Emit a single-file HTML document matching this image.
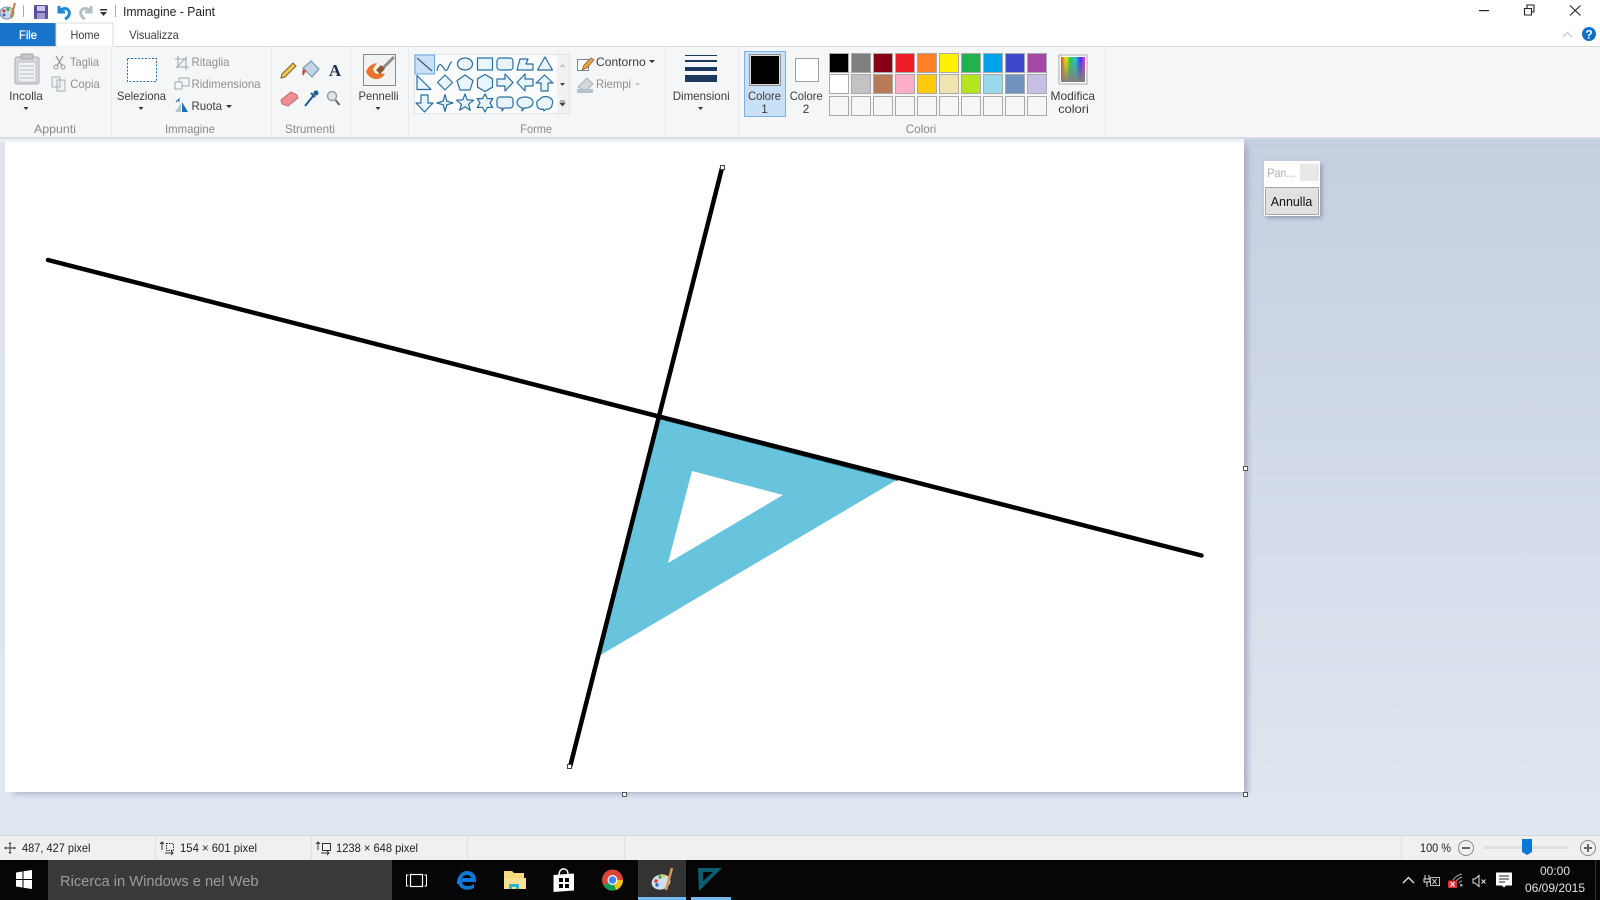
<!DOCTYPE html>
<html><head><meta charset="utf-8"><title>Immagine - Paint</title>
<style>
html,body{margin:0;padding:0;width:1600px;height:900px;overflow:hidden;background:#fff}
svg{display:block;position:absolute;left:0;top:0}
text{font-family:"Liberation Sans",sans-serif;font-size:12px;fill:#3c3c3c}
.g{fill:#8f8f8f}
.lb{fill:#8a8a8a}
.m{text-anchor:middle}
.sh *{fill:#e8f5fc;stroke:#2a6d9c;stroke-width:1.2;stroke-linejoin:round}
.tray{fill:#e4e4e4}
</style></head><body>
<svg width="1600" height="900" viewBox="0 0 1600 900" xmlns="http://www.w3.org/2000/svg">
<defs>
<linearGradient id="bg" x1="0" y1="0" x2="0" y2="1"><stop offset="0" stop-color="#c5cfdf"/><stop offset="1" stop-color="#e0e7f2"/></linearGradient>
<linearGradient id="lf" x1="0" y1="0" x2="0" y2="1"><stop offset="0" stop-color="#dfe4ee"/><stop offset="1" stop-color="#dfe6f1"/></linearGradient>
<linearGradient id="rb" x1="0" y1="0" x2="1" y2="0"><stop offset="0" stop-color="#e33"/><stop offset=".2" stop-color="#ee0"/><stop offset=".4" stop-color="#2c4"/><stop offset=".6" stop-color="#2cd"/><stop offset=".8" stop-color="#33e"/><stop offset="1" stop-color="#e3c"/></linearGradient>
<linearGradient id="rbv" x1="0" y1="0" x2="0" y2="1"><stop offset="0" stop-color="#808080" stop-opacity="0"/><stop offset="1" stop-color="#808080"/></linearGradient>
<filter id="blur" x="-5%" y="-5%" width="110%" height="110%"><feGaussianBlur stdDeviation="3"/></filter>
<filter id="blur2" x="-30%" y="-30%" width="160%" height="160%"><feGaussianBlur stdDeviation="2.5"/></filter>
</defs>

<!-- window white top -->
<rect width="1600" height="46" fill="#fff"/>
<!-- canvas area -->
<rect x="0" y="138" width="1600" height="697" fill="url(#bg)"/>
<rect x="0" y="138" width="5" height="697" fill="url(#lf)"/>
<rect x="14" y="146" width="1234" height="648" fill="#a9b1c6" filter="url(#blur)"/>
<rect x="0" y="139" width="1244" height="3" fill="#edf0f5"/>
<rect x="5" y="142" width="1239" height="650" fill="#fff"/>
<!-- ribbon -->
<rect x="0" y="46" width="1600" height="92" fill="#f5f6f7"/>
<rect x="0" y="46" width="1600" height="1" fill="#dadbdc"/>
<rect x="0" y="137" width="1600" height="2" fill="#d7dce4"/>
<g fill="#e9eaec">
<rect x="111" y="47" width="1" height="90"/><rect x="271" y="47" width="1" height="90"/>
<rect x="350" y="47" width="1" height="90"/><rect x="408" y="47" width="1" height="90"/>
<rect x="665" y="47" width="1" height="90"/><rect x="738" y="47" width="1" height="90"/>
<rect x="1105" y="47" width="1" height="90"/></g>

<!-- tabs -->
<rect x="0" y="23" width="56" height="23" fill="#1a74c9"/>
<text x="28" y="39" class="m" textLength="18" lengthAdjust="spacingAndGlyphs" style="fill:#fff;stroke:#fff;stroke-width:.25">File</text>
<path d="M56 46V23H113V46" fill="#fff" stroke="#dadbdc"/>
<rect x="57" y="45" width="56" height="3" fill="#f5f6f7"/>
<text x="70.500" y="39" textLength="29" lengthAdjust="spacingAndGlyphs">Home</text>
<text x="129.300" y="39" textLength="49.500" lengthAdjust="spacingAndGlyphs">Visualizza</text>

<!-- title bar -->
<text x="123" y="16" textLength="92" lengthAdjust="spacingAndGlyphs" style="font-size:13px;fill:#222">Immagine - Paint</text>
<rect x="23" y="5" width="1" height="12" fill="#aaa"/>
<rect x="115" y="5" width="1" height="12" fill="#aaa"/>
<!-- paint app icon -->
<ellipse cx="7" cy="13" rx="7" ry="6" fill="#c7d9e8" stroke="#6f8aa0"/>
<circle cx="4" cy="11" r="1.5" fill="#d33"/><circle cx="8" cy="9.500" r="1.500" fill="#3a3"/><circle cx="4" cy="15" r="1.500" fill="#36c"/>
<path d="M15 3L11 17" stroke="#c77b30" stroke-width="2"/>
<!-- save -->
<rect x="34" y="5" width="14" height="14" rx="1" fill="#5a4fa0"/>
<rect x="37" y="6" width="8" height="5" fill="#c9c6e8"/><rect x="37" y="13" width="8" height="6" fill="#9c98c8"/>
<!-- undo -->
<path d="M59 6V12H65M60 11C64 6 71 9 69 15C68 17 67 18 65 19" fill="none" stroke="#1e88d8" stroke-width="3"/>
<!-- redo -->
<path d="M91 6V12H85M90 11C86 6 79 9 81 15C82 17 83 18 85 19" fill="none" stroke="#b4c0c8" stroke-width="3"/>
<rect x="100" y="9" width="7" height="1.500" fill="#333"/><path d="M100 12h7l-3.500 4z" fill="#333"/>

<!-- window controls -->
<rect x="1479" y="10" width="10" height="1.200" fill="#222"/>
<path d="M1524.500 13.500h7v6.500h-7zM1527 13v-3h7v7h-2.500" fill="none" stroke="#222" stroke-width="1.100" transform="translate(0,-5)"/>
<path d="M1570 5.500L1580.500 15.500M1580.500 5.500L1570 15.500" stroke="#222" stroke-width="1.100"/>
<path d="M1563 37l4.500-4.500 4.500 4.500" fill="none" stroke="#c8c8c8" stroke-width="1.300"/>
<circle cx="1589" cy="34" r="7" fill="#1070c8"/>
<text x="1589" y="38.500" class="m" style="fill:#fff;font-weight:bold;font-size:12px">?</text>

<!-- Appunti -->
<rect x="15" y="57" width="24" height="27" rx="2" fill="#d8d8da" stroke="#a9acb0"/>
<rect x="18" y="62" width="18" height="20" fill="#eef0f3" stroke="#bcbfc4"/>
<path d="M20 66h14M20 70h14M20 74h14M20 78h14" stroke="#b5bcc6"/>
<rect x="21" y="54" width="12" height="5" rx="1" fill="#c5c6c8" stroke="#a5a5a8"/>
<text x="9.300" y="100" textLength="33.500" lengthAdjust="spacingAndGlyphs">Incolla</text>
<path d="M23.500 107h5l-2.500 3z" fill="#333"/>
<path d="M56 56l6 10M63 56l-6 10" stroke="#9a9a9a" stroke-width="1.300"/><circle cx="56" cy="67" r="2" fill="none" stroke="#9a9a9a"/><circle cx="63" cy="67" r="2" fill="none" stroke="#9a9a9a"/>
<text x="70" y="66" class="g" textLength="29" lengthAdjust="spacingAndGlyphs">Taglia</text>
<path d="M52 77h8v10h-8zM57 80h8v11h-8z" fill="#eef0f1" stroke="#aab0b4"/>
<text x="70.300" y="88" class="g" textLength="29.500" lengthAdjust="spacingAndGlyphs">Copia</text>
<text x="34" y="133" class="lb" textLength="42" lengthAdjust="spacingAndGlyphs">Appunti</text>

<!-- Immagine -->
<rect x="127.500" y="58.500" width="29" height="23" fill="#fff" stroke="#2a6fb0" stroke-dasharray="2 1.500"/>
<text x="117" y="100" textLength="49" lengthAdjust="spacingAndGlyphs">Seleziona</text>
<path d="M138.500 107h5l-2.500 3z" fill="#333"/>
<path d="M178 56v11h11M175 59h11v11M176 68l11-11" fill="none" stroke="#9da5aa"/>
<text x="191.500" y="66" class="g" textLength="38" lengthAdjust="spacingAndGlyphs">Ritaglia</text>
<path d="M175 82h7v7h-7zM179 82v-4h10v8h-7" fill="none" stroke="#9da5aa"/>
<text x="191.500" y="88" class="g" textLength="69" lengthAdjust="spacingAndGlyphs">Ridimensiona</text>
<path d="M175 112l6-9v9z" fill="#b9c6d0"/><path d="M182 102l6 10h-6z" fill="#1d72b5"/><path d="M176 102l3-3v3" stroke="#1d72b5" fill="none"/>
<text x="191.500" y="110" textLength="30.500" lengthAdjust="spacingAndGlyphs">Ruota</text>
<path d="M226 105h6l-3 3z" fill="#333"/>
<text x="165" y="133" class="lb" textLength="50" lengthAdjust="spacingAndGlyphs">Immagine</text>

<!-- Strumenti -->
<path d="M281 78l1-4 11-11 3 3-11 11z" fill="#f0c552" stroke="#7a6a36"/>
<path d="M303 68l8-7 8 8-7 8z" fill="#c3d6e8" stroke="#6a8ba8"/><path d="M303 69c-1 3-1 5 0 7l3-5z" fill="#d8442c"/>
<text x="335" y="76" class="m" style="font:bold 17px 'Liberation Serif',serif;fill:#1d2c44">A</text>
<path d="M281 100l10-8 6 3 1 3-10 8-6-2z" fill="#f08c94" stroke="#c46a70"/>
<path d="M305 106l9-11M311 93l4 4" stroke="#1f5c8c" stroke-width="2"/><circle cx="316" cy="93" r="2.500" fill="#1f5c8c"/>
<circle cx="332" cy="96" r="4.500" fill="#dbe6ee" stroke="#8a949c" stroke-width="1.300"/><path d="M335.500 100l4 5" stroke="#666" stroke-width="2"/>
<text x="285" y="133" class="lb" textLength="50" lengthAdjust="spacingAndGlyphs">Strumenti</text>

<!-- Pennelli -->
<rect x="363.500" y="54.500" width="32" height="31" fill="#f2f2f2" stroke="#8a8a8a"/>
<path d="M366 72c4 8 14 10 19 2l-6-1c-2 2-5 0-6-4l4-6c-5 1-9 3-11 9z" fill="#e8732a"/>
<path d="M379 72l15-15" stroke="#8d8d8d" stroke-width="3"/><path d="M376 70l5-5 4 4-5 5z" fill="#8a5a30"/>
<text x="358.500" y="100" textLength="40" lengthAdjust="spacingAndGlyphs">Pennelli</text>
<path d="M375.500 107h5l-2.500 3z" fill="#333"/>

<!-- Forme gallery -->
<rect x="414.500" y="54.500" width="155" height="59" fill="#fbfcfd" stroke="#dfe2e6"/>
<rect x="557" y="55" width="12" height="58" fill="#f0f1f2"/>
<rect x="415" y="55" width="19.500" height="19" fill="#c9e0f7" stroke="#6fa8dc"/>
<path d="M417 58l15 13" stroke="#3c5a78" stroke-width="1.200"/>
<path d="M559.500 67l3-3.500 3 3.500z" fill="#c6c6c6"/><path d="M560 83h5l-2.500 3z" fill="#444"/><path d="M560 101h5M560 103h5l-2.500 3z" stroke="#444" fill="#444" stroke-width=".7"/>
<path d="M437 71c2-12 6-4 8-1 3 3 4-8 7-8" fill="none" stroke="#2a6d9c" stroke-width="1.200"/>
<g class="sh">
<ellipse cx="465" cy="64" rx="7.500" ry="6"/>
<rect x="477.500" y="58" width="15" height="12"/>
<rect x="497" y="58" width="16" height="12" rx="3"/>
<path d="M517 70l3-11h8l-2 5h7v6z"/>
<path d="M545 57l7.500 13h-15z"/>
<path d="M417 75.500l14 14h-14z"/>
<path d="M445 75l7.500 7.500-7.500 7.500-7.500-7.500z"/>
<g transform="translate(465,83)"><path d="M0-8 8-2.400 5 7h-10L-8-2.400z"/></g>
<g transform="translate(485,83)"><path d="M0-8.500 7.500-4.200V4.200L0 8.500-7.500 4.200V-4.200z"/></g>
<path d="M497 79h8v-5l8 8.500-8 8.500v-5h-8z"/>
<path d="M533 79h-8v-5l-8 8.500 8 8.500v-5h8z"/>
<path d="M541 91v-8h-5l8.500-8 8.500 8h-5v8z"/>
<path d="M421 95v8h-5l8.500 9 8.500-9h-5v-8z"/>
<g transform="translate(445,103)"><path d="M0-8.500 1.800-1.800 8 0 1.800 1.800 0 8.500-1.800 1.800-8 0-1.800-1.800z"/></g>
<g transform="translate(465,103)"><path d="M0-9 2.200-3.100 8.600-2.800 3.600 1.200 5.300 7.300 0 3.800-5.300 7.300-3.600 1.200-8.600-2.800-2.200-3.100z"/></g>
<g transform="translate(485,103)"><path d="M0-9 2.500-4.300 7.800-4.500 5 0 7.800 4.500 2.500 4.300 0 9-2.500 4.300-7.800 4.500-5 0-7.800-4.500-2.500-4.300z"/></g>
<path d="M500 97h10a3 3 0 013 3v5a3 3 0 01-3 3h-6l-2 3v-3h-2a3 3 0 01-3-3v-5a3 3 0 013-3z"/>
<path d="M525 97c5 0 8 2.500 8 5.500s-3 5.500-8 5.500h-1l-2 3v-3.300c-3-.8-5-3-5-5.200 0-3 3-5.500 8-5.500z"/>
<path d="M540 99c2-3 8-3 10-1 3 1 3 5 2 7 0 3-4 5-6 4l-2 2-1-2c-3 1-6-1-6-4-1-3 1-5 3-6z"/>
</g>
<!-- Contorno / Riempi -->
<rect x="577.500" y="59.500" width="11" height="11" fill="#fff" stroke="#7a8894"/>
<path d="M582 70l2-5 7-7 3 2-7 8z" fill="#e8a24a" stroke="#8a5c28" stroke-width=".7"/>
<text x="596" y="66" textLength="49.700" lengthAdjust="spacingAndGlyphs">Contorno</text>
<path d="M649 60h6l-3 3z" fill="#333"/>
<path d="M578 87l9-9 6 6-7 7z" fill="#cfd6dc" stroke="#aab5be"/><rect x="577" y="89" width="16" height="4" fill="#b5c2cc"/>
<text x="596" y="88" class="g" textLength="35" lengthAdjust="spacingAndGlyphs">Riempi</text>
<path d="M635 83h5l-2.500 2.500z" fill="#c0c0c0"/>
<text x="520.300" y="133" class="lb" textLength="31.700" lengthAdjust="spacingAndGlyphs">Forme</text>

<!-- Dimensioni -->
<g fill="#1c3a5e">
<rect x="685" y="55" width="32" height="1"/><rect x="685" y="60" width="32" height="2"/>
<rect x="685" y="67" width="32" height="4"/><rect x="685" y="75" width="32" height="7"/></g>
<text x="672.700" y="100" textLength="57" lengthAdjust="spacingAndGlyphs">Dimensioni</text>
<path d="M698 107h5l-2.500 3z" fill="#333"/>

<!-- Colori -->
<rect x="744.500" y="51.500" width="41" height="65" fill="#c9e0f7" stroke="#7db2e6"/>
<rect x="749.500" y="54.500" width="31" height="31" fill="#000" stroke="#8e8e8e" stroke-width="1"/>
<rect x="750.500" y="55.500" width="29" height="29" fill="#000" stroke="#ddd" stroke-width="1"/>
<text x="748" y="100" textLength="33" lengthAdjust="spacingAndGlyphs">Colore</text><text x="764.500" y="113" class="m">1</text>
<rect x="795.500" y="58.500" width="23" height="23" fill="#fff" stroke="#a0a0a0"/>
<text x="789.700" y="100" textLength="33" lengthAdjust="spacingAndGlyphs">Colore</text><text x="806" y="113" class="m">2</text>

<g stroke="#a9a9a9">
<rect x="829.500" y="53.500" width="19" height="19" fill="#000"/>
<rect x="851.500" y="53.500" width="19" height="19" fill="#7f7f7f"/>
<rect x="873.500" y="53.500" width="19" height="19" fill="#880015"/>
<rect x="895.500" y="53.500" width="19" height="19" fill="#ed1c24"/>
<rect x="917.500" y="53.500" width="19" height="19" fill="#ff7f27"/>
<rect x="939.500" y="53.500" width="19" height="19" fill="#fff200"/>
<rect x="961.500" y="53.500" width="19" height="19" fill="#22b14c"/>
<rect x="983.500" y="53.500" width="19" height="19" fill="#00a2e8"/>
<rect x="1005.500" y="53.500" width="19" height="19" fill="#3f48cc"/>
<rect x="1027.500" y="53.500" width="19" height="19" fill="#a349a4"/>
<rect x="829.500" y="74.500" width="19" height="19" fill="#fff"/>
<rect x="851.500" y="74.500" width="19" height="19" fill="#c3c3c3"/>
<rect x="873.500" y="74.500" width="19" height="19" fill="#b97a57"/>
<rect x="895.500" y="74.500" width="19" height="19" fill="#ffaec9"/>
<rect x="917.500" y="74.500" width="19" height="19" fill="#ffc90e"/>
<rect x="939.500" y="74.500" width="19" height="19" fill="#efe4b0"/>
<rect x="961.500" y="74.500" width="19" height="19" fill="#b5e61d"/>
<rect x="983.500" y="74.500" width="19" height="19" fill="#99d9ea"/>
<rect x="1005.500" y="74.500" width="19" height="19" fill="#7092be"/>
<rect x="1027.500" y="74.500" width="19" height="19" fill="#c8bfe7"/>
<g fill="#f5f6f7">
<rect x="829.500" y="96.500" width="19" height="19"/><rect x="851.500" y="96.500" width="19" height="19"/>
<rect x="873.500" y="96.500" width="19" height="19"/><rect x="895.500" y="96.500" width="19" height="19"/>
<rect x="917.500" y="96.500" width="19" height="19"/><rect x="939.500" y="96.500" width="19" height="19"/>
<rect x="961.500" y="96.500" width="19" height="19"/><rect x="983.500" y="96.500" width="19" height="19"/>
<rect x="1005.500" y="96.500" width="19" height="19"/><rect x="1027.500" y="96.500" width="19" height="19"/>
</g></g>
<rect x="1059" y="55" width="28" height="29" fill="#fff" stroke="#a9a9a9"/>
<rect x="1061" y="57" width="24" height="25" fill="url(#rb)"/><rect x="1061" y="57" width="24" height="25" fill="url(#rbv)"/>
<text x="1050.500" y="100" textLength="44.500" lengthAdjust="spacingAndGlyphs">Modifica</text><text x="1058.300" y="113" textLength="30.500" lengthAdjust="spacingAndGlyphs">colori</text>
<text x="905.700" y="133" class="lb" textLength="30.600" lengthAdjust="spacingAndGlyphs">Colori</text>

<!-- drawing -->
<path d="M659 416L900 478L599 656z M692 471L668 563L783 495z" fill="#67c4dc" fill-rule="evenodd"/>
<path d="M659 418L898 480" stroke="#15586e" stroke-width="2"/>
<path d="M659 418L601 650" stroke="#15586e" stroke-width="2"/>
<path d="M48 260L1201.500 555.500" stroke="#000" stroke-width="4.500" stroke-linecap="round"/>
<path d="M722 168L570 767" stroke="#000" stroke-width="4.500"/>
<g fill="#fff" stroke="#444"><rect x="720.500" y="165.500" width="4" height="4"/><rect x="567.500" y="764.500" width="4" height="4"/></g>
<g fill="#fff" stroke="#555"><rect x="1243.500" y="466.500" width="4" height="4"/><rect x="622.500" y="792.500" width="4" height="4"/><rect x="1243.500" y="792.500" width="4" height="4"/></g>

<!-- floating panel -->
<rect x="1266" y="164" width="56" height="54" fill="#8f98ad" filter="url(#blur2)"/>
<rect x="1264" y="161" width="56" height="55" fill="#fff"/>
<rect x="1300" y="164" width="19" height="17" fill="#e8e8e8"/>
<text x="1267.300" y="177" textLength="28" lengthAdjust="spacingAndGlyphs" style="fill:#b0b0b0">Pan...</text>
<rect x="1265.500" y="187.500" width="53" height="27" fill="#e1e1e1" stroke="#a8a8a8"/>
<text x="1270.700" y="206" textLength="41.600" lengthAdjust="spacingAndGlyphs" style="font-size:13px;fill:#111">Annulla</text>

<!-- status bar -->
<rect x="0" y="835" width="1600" height="25" fill="#f0f0f0"/>
<rect x="0" y="835" width="1600" height="1" fill="#d6d9de"/>
<g fill="#e0e0e0"><rect x="155" y="836" width="1" height="24"/><rect x="311" y="836" width="1" height="24"/><rect x="467" y="836" width="1" height="24"/><rect x="624" y="836" width="1" height="24"/><rect x="1401" y="836" width="1" height="24"/></g>
<path d="M5 848h10M10 843v10" stroke="#333"/><path d="M10 842l-1.500 2h3zM10 854l-1.500-2h3zM4 848l2-1.500v3zM16 848l-2-1.500v3z" fill="#333"/>
<text x="22" y="852" textLength="68.500" lengthAdjust="spacingAndGlyphs" style="fill:#222">487, 427 pixel</text>
<path d="M162 842v8M160 844l2-2 2 2M165 853h8M171 851l2 2-2 2" fill="none" stroke="#333"/><rect x="166.500" y="843.500" width="7" height="7" fill="none" stroke="#333" stroke-dasharray="1.500 1"/>
<text x="180" y="852" textLength="77" lengthAdjust="spacingAndGlyphs" style="fill:#222">154 × 601 pixel</text>
<path d="M318 842v8M316 844l2-2 2 2M321 853h8M327 851l2 2-2 2" fill="none" stroke="#333"/><rect x="322.500" y="843.500" width="8" height="7" fill="none" stroke="#333"/>
<text x="336" y="852" textLength="82" lengthAdjust="spacingAndGlyphs" style="fill:#222">1238 × 648 pixel</text>
<text x="1420" y="852" textLength="31" lengthAdjust="spacingAndGlyphs" style="fill:#222">100 %</text>
<circle cx="1466" cy="848" r="7.500" fill="#f0f0f0" stroke="#8a8a8a"/><rect x="1462" y="847" width="8" height="2" fill="#666"/>
<rect x="1484" y="846" width="85" height="3" fill="#e0e0e0"/>
<path d="M1522 839h10v13l-5 3-5-3z" fill="#0a78d6"/>
<circle cx="1588" cy="848" r="7.500" fill="#f0f0f0" stroke="#8a8a8a"/><path d="M1584 848h8M1588 844v8" stroke="#666" stroke-width="2"/>

<!-- taskbar -->
<rect x="0" y="860" width="1600" height="40" fill="#060606"/>
<path d="M16 872.500l6.500-1v7.500H16zM23.500 871.200l8.500-1.200v9h-8.500zM16 880h6.500v7.500l-6.500-1zM23.500 880H32v9l-8.500-1.200z" fill="#fff"/>
<rect x="48" y="860" width="344" height="40" fill="#3a3a3a"/>
<text x="60" y="886" textLength="198.500" lengthAdjust="spacingAndGlyphs" style="font-size:15px;fill:#9c9c9c">Ricerca in Windows e nel Web</text>
<!-- task view -->
<rect x="410.500" y="874.500" width="12" height="12" fill="none" stroke="#fff" stroke-width="1.200"/>
<path d="M408.500 875h-2v11h2M424.500 875h2v11h-2" fill="none" stroke="#fff"/>
<!-- edge -->
<path d="M457 883c0-7 5-12 10-12 6 0 9 4 9 9v2h-14c0 4 7 6 12 2v4c-5 3-13 2-15-3-1-1-2-1-2-2zM462 878h9c0-4-7-4-9 0z" fill="#0e79d8" fill-rule="evenodd"/>
<!-- explorer -->
<path d="M504 871h8l2 2h10v16h-20z" fill="#f5d97c"/>
<rect x="504" y="878" width="22" height="11" fill="#f7e291"/>
<path d="M509 889v-5h10v5h-3v-2h-4v2z" fill="#2ab3d6"/>
<!-- store -->
<path d="M553.500 875l20.500-1.500v17l-20.500 1.500z" fill="#fff"/>
<path d="M559 875c0-8 9-8 9-1" fill="none" stroke="#fff" stroke-width="1.400"/>
<path d="M559 878h4v4h-4zM565 878h4v4h-4zM559 884h4v4h-4zM565 884h4v4h-4z" fill="#060606"/>
<!-- chrome -->
<circle cx="612.500" cy="880" r="10.500" fill="#db4437"/>
<path d="M612.500 880L603.500 885.500A10.500 10.500 0 00616 890z" fill="#0f9d58"/>
<path d="M612.500 880L623 880A10.500 10.500 0 01616 890z" fill="#f4c20d"/>
<circle cx="612.500" cy="880" r="5" fill="#fff"/><circle cx="612.500" cy="880" r="3.800" fill="#4285f4"/>
<!-- paint -->
<rect x="638" y="860" width="48" height="37" fill="#333"/>
<rect x="638" y="897" width="48" height="3" fill="#76b9ed"/>
<ellipse cx="661" cy="882" rx="9.500" ry="7.500" fill="#cfe0ec" transform="rotate(-15 661 882)"/>
<circle cx="656" cy="881" r="1.700" fill="#d33"/><circle cx="660" cy="877" r="1.700" fill="#3a3"/><circle cx="657" cy="885" r="1.700" fill="#36c"/><circle cx="664" cy="876" r="1.500" fill="#fb3"/>
<path d="M672 868l-6 22" stroke="#d8954a" stroke-width="2.500"/>
<!-- triangle app -->
<rect x="691" y="897" width="40" height="3" fill="#76b9ed"/>
<path d="M698 868H722L699 891zM703 872v9l10-9z" fill="#0d5c70" fill-rule="evenodd"/>
<!-- tray -->
<path d="M1403 883l5.500-5.500 5.500 5.500" fill="none" stroke="#eee" stroke-width="1.300"/>
<path d="M1425 875v4M1429 875v4M1424 879h6v3h-6zM1427 882v5" stroke="#e4e4e4" fill="none"/>
<rect x="1430.500" y="877.500" width="9" height="8" fill="none" stroke="#bbb"/><path d="M1432.500 879l4 5M1436.500 879l-4 5" stroke="#ddd"/>
<path d="M1453 880c2-3 5-5 9-6M1456 881c2-2 3-3 6-4M1459 883c1-1 2-2 3-2" fill="none" stroke="#8a8a8a" stroke-width="1.300"/>
<rect x="1460" y="884" width="2.500" height="2.500" fill="#999"/>
<rect x="1448" y="880.500" width="9" height="7.500" rx="1" fill="#e02f35"/><path d="M1450.500 882l4 4.500M1454.500 882l-4 4.500" stroke="#fff" stroke-width="1.200"/>
<path d="M1473 879h2l4-3.500v11l-4-3.500h-2z" fill="none" stroke="#e4e4e4"/><path d="M1481.500 879.500l4 4M1485.500 879.500l-4 4" stroke="#e4e4e4"/>
<path d="M1496 872.500h16v13h-6l-2 2-2-2h-6z" fill="#fff"/><path d="M1499 876h10M1499 879h10M1499 882h6" stroke="#222"/>
<text x="1555" y="875" class="m tray">00:00</text>
<text x="1555" y="892" class="m tray">06/09/2015</text>
<rect x="1595" y="860" width="1" height="40" fill="#333"/>
</svg>
</body></html>
